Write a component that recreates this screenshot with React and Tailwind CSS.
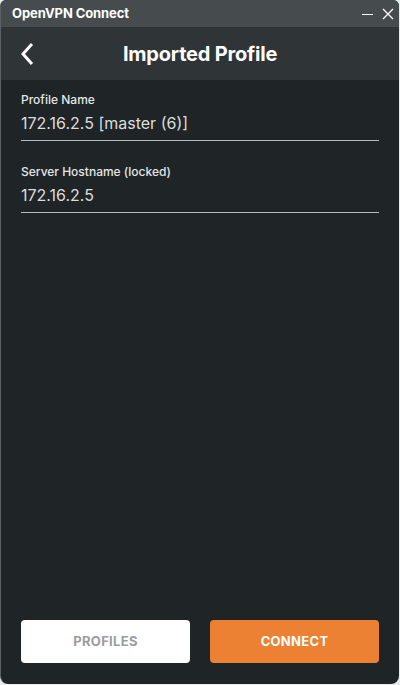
export default function App() {
  return (
    <div className="w-[400px] h-[685px] bg-[#e9eaeb] font-['Inter',sans-serif]">
      <div className="w-[399px] h-[684px] flex flex-col rounded-b-[8px] rounded-t-[6px] overflow-hidden bg-[#1f2426] border-l border-[#5b6062]">
        <div className="h-[27px] shrink-0 bg-[#464c4e] flex items-center justify-between pl-[11px] pr-[5px]">
          <span className="text-[13px] font-bold text-white tracking-[-0.1px]">OpenVPN Connect</span>
          <div className="flex items-center gap-[9px] text-white">
            <svg width="11" height="12" viewBox="0 0 11 12"><path d="M0 6.5h11" stroke="currentColor" strokeWidth="1.2" /></svg>
            <svg width="12" height="12" viewBox="0 0 12 12"><path d="M1 1l10 10M11 1L1 11" stroke="currentColor" strokeWidth="1.3" /></svg>
          </div>
        </div>
        <div className="h-[53px] shrink-0 bg-[#2f3436] flex items-center relative">
          <svg className="absolute left-[18px] top-[15px]" width="16" height="24" viewBox="0 0 16 24">
            <path d="M12 3L4 12l8 9" stroke="white" strokeWidth="3" fill="none" strokeLinecap="square" />
          </svg>
          <h1 className="w-full text-center text-[20px] font-bold text-white tracking-[-0.2px]">Imported Profile</h1>
        </div>
        <div className="flex-1 flex flex-col pl-[20px] pr-[20px] pt-[12px]">
          <div className="flex flex-col">
            <span className="text-[12px] text-[#e4e6e6] leading-[16px] font-medium">Profile Name</span>
            <span className="text-[16px] text-[#dcdede] leading-[22px] mt-[4px]">172.16.2.5 [master (6)]</span>
            <div className="h-px bg-[#b8bbbc] mt-[6px]" />
          </div>
          <div className="flex flex-col mt-[23px]">
            <span className="text-[12px] text-[#e4e6e6] leading-[16px] font-medium">Server Hostname (locked)</span>
            <span className="text-[16px] text-[#dcdede] leading-[22px] mt-[4px]">172.16.2.5</span>
            <div className="h-px bg-[#b8bbbc] mt-[6px]" />
          </div>
          <div className="flex-1" />
          <div className="flex gap-[20px] mb-[21px]">
            <button className="flex-1 h-[43px] bg-white rounded-[4px] text-[13px] font-bold text-[#9c9c9e] tracking-[0.3px]">PROFILES</button>
            <button className="flex-1 h-[43px] bg-[#ec8133] rounded-[4px] text-[13px] font-bold text-white tracking-[0.3px]">CONNECT</button>
          </div>
        </div>
      </div>
    </div>
  );
}
